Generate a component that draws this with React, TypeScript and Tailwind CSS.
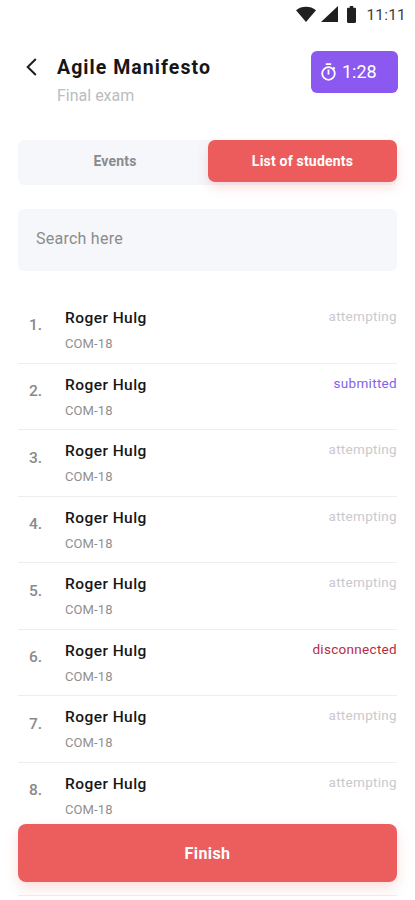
import { useState } from 'react';

type Status = 'attempting' | 'submitted' | 'disconnected';

interface Student {
  id: number;
  name: string;
  group: string;
  status: Status;
}

const STATUS_COLORS: Record<Status, string> = {
  attempting: 'text-[#c9c9ce]',
  submitted: 'text-[#8262ea]',
  disconnected: 'text-[#b92c42]',
};

const STATUSES: Status[] = [
  'attempting',
  'submitted',
  'attempting',
  'attempting',
  'attempting',
  'disconnected',
  'attempting',
  'attempting',
];

const STUDENTS: Student[] = STATUSES.map((status, i) => ({
  id: i + 1,
  name: 'Roger Hulg',
  group: 'COM-18',
  status,
}));

function StatusBar() {
  return (
    <div className="flex h-7 items-start justify-end pr-[9px] pt-[6px]">
      <svg width="20" height="16" viewBox="0 0 20 16" className="mr-[5px]" fill="#202020">
        <path d="M0 4.2C5.6-.4 14.4-.4 20 4.2L10 16Z" />
      </svg>
      <svg width="17" height="16" viewBox="0 0 17 16" className="mr-[9px]" fill="#202020">
        <path d="M17 0V16H0Z" />
      </svg>
      <svg width="9" height="17" viewBox="0 0 9 17" className="mr-[10px]" fill="#202020">
        <path d="M2.8 0h3.4v1.8h1.6c.7 0 1.2.5 1.2 1.2v12.8c0 .7-.5 1.2-1.2 1.2H1.2C.5 17 0 16.5 0 15.8V3c0-.7.5-1.2 1.2-1.2h1.6Z" />
      </svg>
      <span className="text-[15.5px] leading-[18px] tracking-[0.2px] text-[#3c3c3c]">11:11</span>
    </div>
  );
}

function TimerIcon() {
  return (
    <svg width="17" height="18" viewBox="0 0 17 18" fill="none" stroke="currentColor" strokeWidth="1.8">
      <circle cx="8.5" cy="10.5" r="6.3" />
      <path d="M5.8 1.1h5.4M8.5 6.5v5M13.3 4.3l1.5 1.5" />
    </svg>
  );
}

function StudentRow({ student }: { student: Student }) {
  return (
    <li className="flex h-[66.5px] border-b border-[#eeeeef]">
      <span className="w-[47px] pl-[11px] pt-[17.5px] text-[15.5px] font-medium leading-5 text-[#8a8a8a]">
        {student.id}.
      </span>
      <div className="flex-1">
        <p className="pt-[11px] text-[15.5px] font-medium leading-5 tracking-[0.45px] text-[#161616]">
          {student.name}
        </p>
        <p className="pt-2 text-[13px] leading-4 tracking-[0.1px] text-[#8f8f8f]">{student.group}</p>
      </div>
      <span className={`pt-[10px] text-[13.5px] leading-[18px] tracking-[0.3px] ${STATUS_COLORS[student.status]}`}>
        {student.status}
      </span>
    </li>
  );
}

export default function App() {
  const [tab, setTab] = useState<'events' | 'students'>('students');
  const [query, setQuery] = useState('');

  const students = STUDENTS.filter((s) => s.name.toLowerCase().includes(query.toLowerCase()));

  const tabClass = (active: boolean) =>
    active
      ? 'h-[42px] w-[189px] rounded-[7px] bg-[#ec5c5c] text-white shadow-[0_5px_12px_rgba(236,92,92,0.2)]'
      : 'h-[42px] flex-1 pl-1 text-[#8b8b8b]';

  return (
    <div className="relative h-[900px] w-full overflow-hidden bg-white font-[Roboto,sans-serif]">
      <StatusBar />

      <header className="flex h-[112px] items-start pl-[26px] pr-[17px] pt-[23px]">
        <button type="button" aria-label="Back" className="mt-[7px] w-[31px]">
          <svg width="11" height="18" viewBox="0 0 11 18" fill="none" stroke="#1c1c1c" strokeWidth="2">
            <path d="M9.8 1 1.7 9l8.1 8" />
          </svg>
        </button>
        <div className="flex-1">
          <h1 className="mt-[5px] text-[19.5px] font-bold leading-6 tracking-[1.05px] text-[#161616]">Agile Manifesto</h1>
          <p className="mt-[6px] text-[16px] leading-5 text-[#bcbcbc]">Final exam</p>
        </div>
        <div className="flex h-[42px] w-[87px] items-center gap-[5px] rounded-[6px] bg-[#8c59f0] pl-[9px] text-white">
          <TimerIcon />
          <span className="text-[18px] leading-5">1:28</span>
        </div>
      </header>

      <main className="px-[18px]">
        <div className="flex h-[45px] items-start rounded-[6px] bg-[#f5f7fb] text-[14px] font-bold tracking-[0.2px]">
          <button type="button" onClick={() => setTab('events')} className={tabClass(tab === 'events')}>
            Events
          </button>
          <button type="button" onClick={() => setTab('students')} className={tabClass(tab === 'students')}>
            List of students
          </button>
        </div>

        <input
          type="text"
          value={query}
          onChange={(e) => setQuery(e.target.value)}
          placeholder="Search here"
          className="mt-6 block h-[62px] w-full rounded-[6px] bg-[#f5f7fb] px-[18px] pb-1 text-[16px] tracking-[0.25px] text-[#161616] outline-none placeholder:text-[#8b8b8b]"
        />

        <ul className="mt-[26px]">
          {students.map((s) => (
            <StudentRow key={s.id} student={s} />
          ))}
          <li className="h-[67px] border-b border-[#eeeeef]" />
        </ul>
      </main>

      {/* Stays above the list */}
      <button
        type="button"
        className="absolute bottom-[18px] left-[18px] right-[18px] h-[58px] rounded-[8px] bg-[#ec5e5e] pt-px text-[16px] font-bold tracking-[0.4px] text-white shadow-[0_6px_14px_rgba(236,92,92,0.2)]"
      >
        Finish
      </button>
    </div>
  );
}
